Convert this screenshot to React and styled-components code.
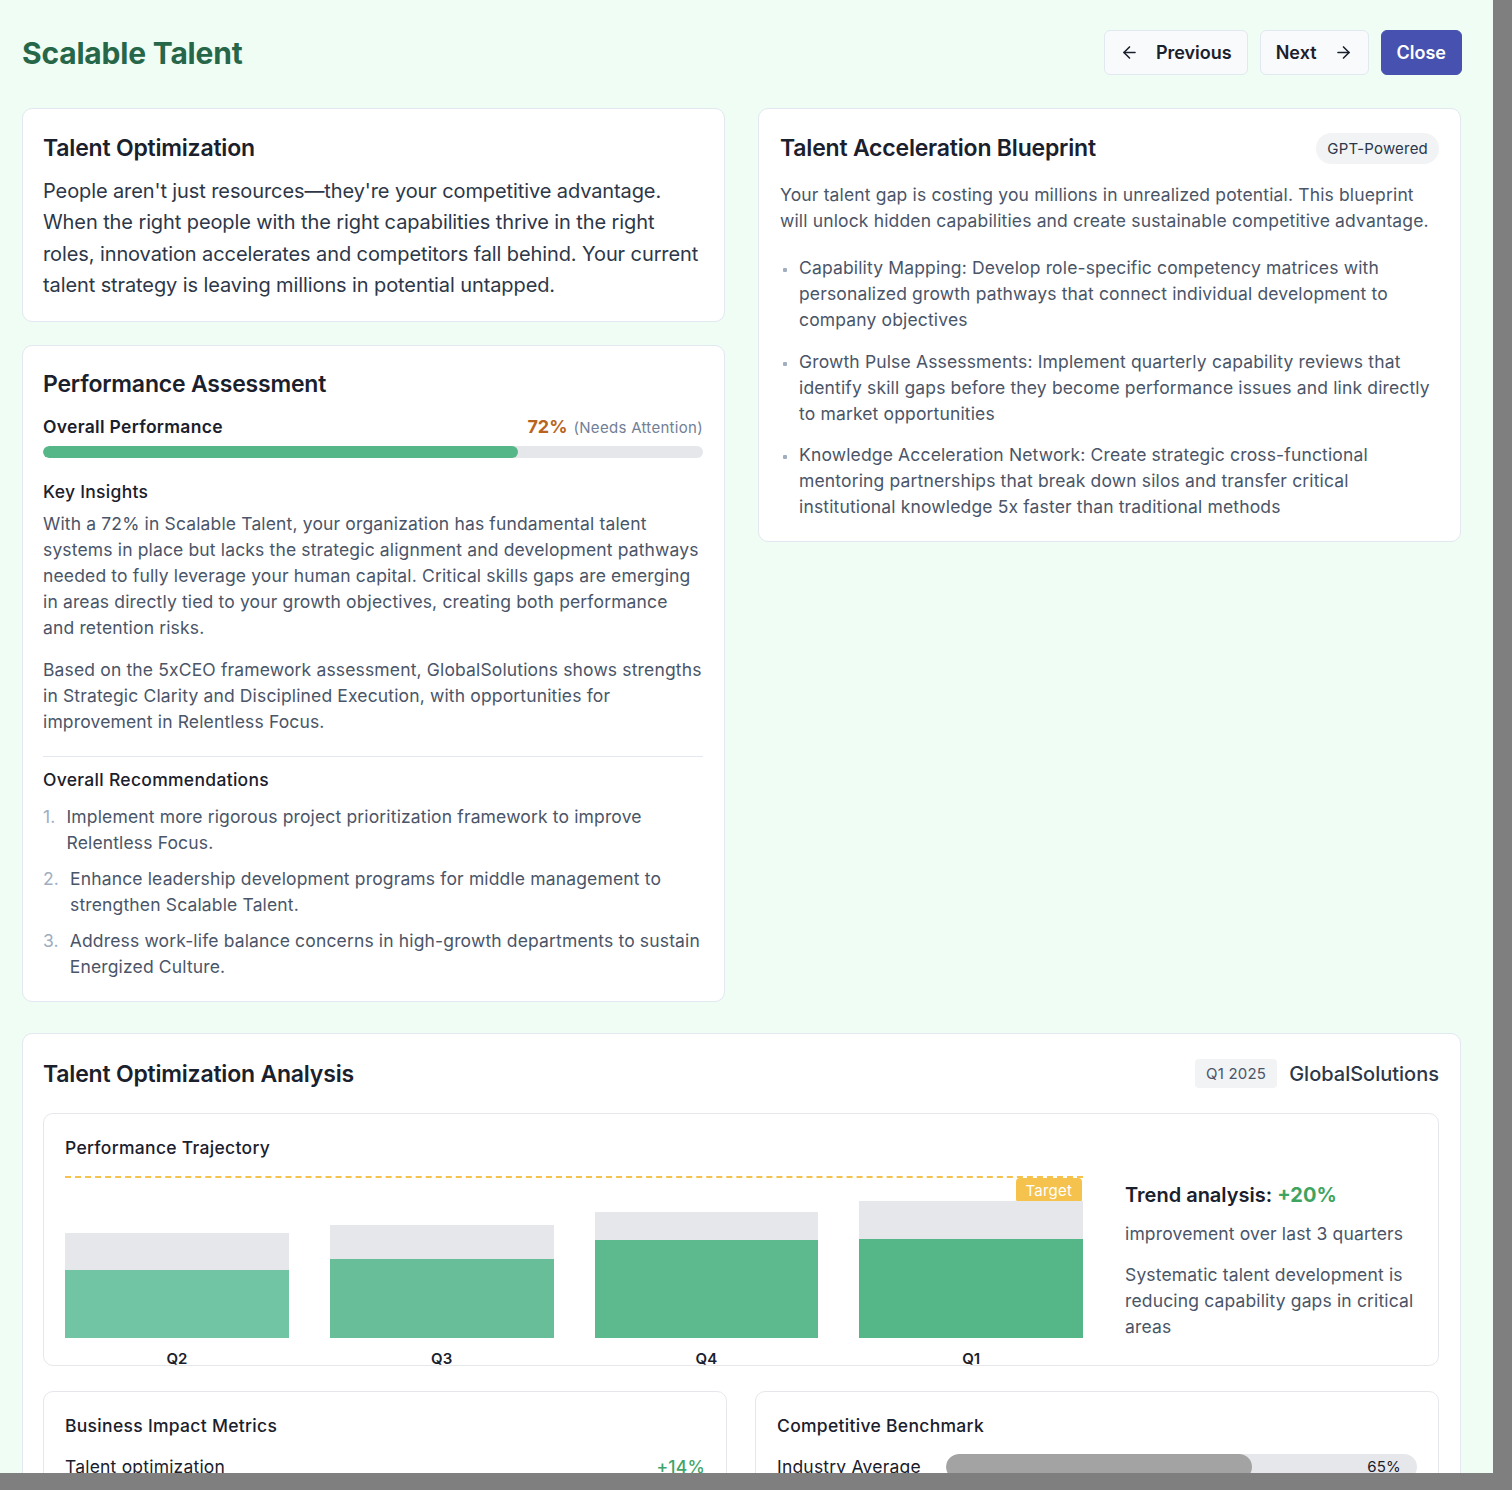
import React from 'react'
import styled, { createGlobalStyle } from 'styled-components'
import { ArrowLeft, ArrowRight } from 'lucide-react'

const GlobalStyle = createGlobalStyle`
  html, body {
    margin: 0;
    padding: 0;
    background: #7f7f7f;
    font-family: Inter, "Noto Sans", "Liberation Sans", sans-serif;
    -webkit-font-smoothing: antialiased;
  }
  * { box-sizing: border-box; }
`

const Modal = styled.div`
  width: 1493px;
  height: 1473px;
  overflow: hidden;
  background: #f0fdf4;
  padding: 30px 31px 0 22px;
`

const Header = styled.header`
  display: flex;
  align-items: center;
  justify-content: space-between;
  height: 45px;
  margin-bottom: 33px;
`

const PageTitle = styled.h1`
  margin: 0;
  font-size: 30px;
  font-weight: 700;
  color: #276749;
  letter-spacing: -0.2px;
`

const Actions = styled.div`
  display: flex;
  gap: 12px;
`

const NavButton = styled.button`
  display: flex;
  align-items: center;
  gap: ${p => (p.$primary ? '0' : '17px')};
  height: 45px;
  padding: 0 15px;
  border-radius: 6px;
  border: 1px solid ${p => (p.$primary ? '#4651b0' : '#e2e8f0')};
  background: ${p => (p.$primary ? '#4651b0' : '#f8fafc')};
  color: ${p => (p.$primary ? '#ffffff' : '#1a202c')};
  font-family: inherit;
  font-size: 18px;
  font-weight: 600;
  cursor: pointer;
`

const Content = styled.main`
  width: 1439px;
`

const TopGrid = styled.div`
  display: grid;
  grid-template-columns: 703px 703px;
  gap: 33px;
  align-items: start;
`

const Column = styled.div`
  display: flex;
  flex-direction: column;
  gap: 23px;
`

const Card = styled.section`
  background: #ffffff;
  border: 1px solid #e2e8f0;
  border-radius: 10px;
  padding: ${p => p.$pad || '23px 21px 19px 20px'};
`

const CardHead = styled.div`
  display: flex;
  align-items: center;
  justify-content: space-between;
`

const CardTitle = styled.h2`
  margin: 0;
  font-size: 23px;
  line-height: 32px;
  font-weight: 600;
  color: #1a202c;
  letter-spacing: -0.2px;
`

const Lead = styled.p`
  margin: 12px 0 0;
  font-size: 20px;
  line-height: 31.4px;
  letter-spacing: -0.1px;
  color: #2d3748;
`

const Body = styled.p`
  margin: ${p => p.$m || '0'};
  font-size: 17.5px;
  line-height: 26px;
  letter-spacing: 0.15px;
  color: #4a5568;
`

const ScoreRow = styled.div`
  display: flex;
  align-items: baseline;
  justify-content: space-between;
  margin-top: 15px;
  line-height: 24px;
`

const ScoreLabel = styled.span`
  font-size: 17.5px;
  font-weight: 600;
  letter-spacing: 0.3px;
  color: #1a202c;
`

const ScoreValue = styled.span`
  font-size: 18px;
  font-weight: 700;
  color: #b7651e;
`

const ScoreNote = styled.span`
  font-size: 15px;
  font-weight: 400;
  letter-spacing: 0.3px;
  color: #718096;
  margin-left: 6px;
`

const Track = styled.div`
  height: 12px;
  background: #e5e7eb;
  border-radius: 999px;
  overflow: hidden;
  margin-top: ${p => p.$mt || 0}px;
`

const Fill = styled.div`
  height: 100%;
  background: #55b788;
  border-radius: 999px;
`

const SubHeading = styled.h3`
  margin: ${p => p.$m || '0'};
  font-size: 17.5px;
  line-height: 24px;
  font-weight: 500;
  letter-spacing: 0.3px;
  color: #1a202c;
`

const Divider = styled.hr`
  border: none;
  border-top: 1px solid #e2e8f0;
  margin: 21px 0 11px;
`

const List = styled.ol`
  list-style: none;
  margin: ${p => p.$m || '12px 0 0'};
  padding: 0;
  display: flex;
  flex-direction: column;
  gap: ${p => p.$gap || 10}px;
`

const Item = styled.li`
  display: flex;
  gap: ${p => p.$gap || 11}px;
  font-size: 17.5px;
  line-height: 26px;
  letter-spacing: 0.15px;
  color: #4a5568;
`

const Num = styled.span`
  color: #a0aec0;
  flex-shrink: 0;
`

const Dot = styled.span`
  flex-shrink: 0;
  width: 4px;
  height: 4px;
  margin: 13px 3px 0 3px;
  background: #a0aec0;
  border-radius: 1px;
`

const Badge = styled.span`
  display: inline-flex;
  align-items: center;
  height: ${p => p.$h || 31}px;
  padding: 0 ${p => p.$px || 11}px;
  border-radius: ${p => p.$r || 16}px;
  background: #f1f3f5;
  font-size: 15px;
  letter-spacing: 0.2px;
  color: ${p => p.$color || '#2d3748'};
`

const Wide = styled.section`
  margin-top: 31px;
  background: #ffffff;
  border: 1px solid #e2e8f0;
  border-radius: 10px;
  padding: 24px 21px 40px 20px;
`

const HeadMeta = styled.div`
  display: flex;
  align-items: center;
  gap: 12px;
`

const Company = styled.span`
  font-size: 20px;
  font-weight: 500;
  color: #2d3748;
`

const Panel = styled.div`
  border: 1px solid #e5e7eb;
  border-radius: 10px;
  background: #ffffff;
  margin-top: ${p => p.$mt || 0}px;
  padding: 22px 21px 25px 21px;
`

const PanelTitle = styled.h4`
  margin: 0;
  font-size: 17.5px;
  line-height: 24px;
  font-weight: 500;
  letter-spacing: 0.3px;
  color: #1a202c;
`

const TrajectoryBody = styled.div`
  display: flex;
  gap: 42px;
  margin-top: 16px;
`

const Chart = styled.div`
  position: relative;
  flex: 1;
  height: 162px;
  display: flex;
  align-items: flex-end;
  gap: 41px;
`

const TargetLine = styled.div`
  position: absolute;
  top: 0;
  left: 0;
  right: 0;
  border-top: 2px dashed #f4c24d;
`

const TargetTag = styled.span`
  position: absolute;
  top: 2px;
  right: 1px;
  height: 25px;
  padding: 0 10px;
  display: flex;
  align-items: center;
  background: #f4c24d;
  color: #ffffff;
  font-size: 15px;
  letter-spacing: 0.2px;
  border-radius: 4px;
`

const BarCol = styled.div`
  position: relative;
  flex: 1;
  background: #e5e7eb;
  display: flex;
  flex-direction: column;
  justify-content: flex-end;
`

const BarFill = styled.div`
  background: ${p => p.$color};
`

const BarLabel = styled.span`
  position: absolute;
  top: calc(100% + 11px);
  left: 0;
  right: 0;
  text-align: center;
  font-size: 15px;
  line-height: 20px;
  font-weight: 600;
  color: #1a202c;
`

const Side = styled.div`
  flex: 0 0 292px;
  padding-top: 6px;
`

const TrendTitle = styled.div`
  font-size: 20px;
  line-height: 26px;
  font-weight: 600;
  color: #1a202c;
`

const Up = styled.span`
  color: #3fa45f;
  font-weight: 700;
`

const LowerGrid = styled.div`
  display: grid;
  grid-template-columns: 1fr 1fr;
  gap: 28px;
  margin-top: 25px;
`

const MetricRow = styled.div`
  display: flex;
  align-items: center;
  justify-content: space-between;
  margin-top: 17px;
  font-size: 17.5px;
  line-height: 24px;
  letter-spacing: 0.2px;
  color: #1a202c;
`

const MetricValue = styled.span`
  color: #3fa46a;
  font-weight: 500;
`

const BenchRow = styled.div`
  display: flex;
  align-items: center;
  gap: 25px;
  margin-top: 16px;
  font-size: 17.5px;
  line-height: 26px;
  letter-spacing: 0.2px;
  color: #1a202c;
`

const BenchTrack = styled.div`
  position: relative;
  flex: 1;
  height: 26px;
  background: #e5e7eb;
  border-radius: 999px;
  overflow: hidden;
`

const BenchFill = styled.div`
  height: 100%;
  background: #a3a3a3;
  border-radius: 999px;
`

const BenchValue = styled.span`
  position: absolute;
  right: 16px;
  top: 0;
  font-size: 15px;
  line-height: 26px;
  color: #1a202c;
`

const insights = [
  'With a 72% in Scalable Talent, your organization has fundamental talent systems in place but lacks the strategic alignment and development pathways needed to fully leverage your human capital. Critical skills gaps are emerging in areas directly tied to your growth objectives, creating both performance and retention risks.',
  'Based on the 5xCEO framework assessment, GlobalSolutions shows strengths in Strategic Clarity and Disciplined Execution, with opportunities for improvement in Relentless Focus.'
]

const recommendations = [
  'Implement more rigorous project prioritization framework to improve Relentless Focus.',
  'Enhance leadership development programs for middle management to strengthen Scalable Talent.',
  'Address work-life balance concerns in high-growth departments to sustain Energized Culture.'
]

const blueprint = [
  'Capability Mapping: Develop role-specific competency matrices with personalized growth pathways that connect individual development to company objectives',
  'Growth Pulse Assessments: Implement quarterly capability reviews that identify skill gaps before they become performance issues and link directly to market opportunities',
  'Knowledge Acceleration Network: Create strategic cross-functional mentoring partnerships that break down silos and transfer critical institutional knowledge 5x faster than traditional methods'
]

const quarters = [
  { label: 'Q2', total: 105, fill: 68, color: '#71c5a5' },
  { label: 'Q3', total: 113, fill: 79, color: '#67be99' },
  { label: 'Q4', total: 126, fill: 98, color: '#5cba8e' },
  { label: 'Q1', total: 137, fill: 99, color: '#55b687' }
]

export default function App() {
  return (
    <>
      <GlobalStyle />
      <Modal>
        <Header>
          <PageTitle>Scalable Talent</PageTitle>
          <Actions>
            <NavButton>
              <ArrowLeft size={19} strokeWidth={2} />
              Previous
            </NavButton>
            <NavButton>
              Next
              <ArrowRight size={19} strokeWidth={2} />
            </NavButton>
            <NavButton $primary>Close</NavButton>
          </Actions>
        </Header>

        <Content>
          <TopGrid>
            <Column>
              <Card>
                <CardTitle>Talent Optimization</CardTitle>
                <Lead>
                  People aren't just resources—they're your competitive advantage. When the right
                  people with the right capabilities thrive in the right roles, innovation
                  accelerates and competitors fall behind. Your current talent strategy is leaving
                  millions in potential untapped.
                </Lead>
              </Card>

              <Card $pad="22px 21px 21px 20px">
                <CardTitle>Performance Assessment</CardTitle>
                <ScoreRow>
                  <ScoreLabel>Overall Performance</ScoreLabel>
                  <span>
                    <ScoreValue>72%</ScoreValue>
                    <ScoreNote>(Needs Attention)</ScoreNote>
                  </span>
                </ScoreRow>
                <Track $mt={6}>
                  <Fill style={{ width: '72%' }} />
                </Track>

                <SubHeading $m="22px 0 0">Key Insights</SubHeading>
                <Body $m="7px 0 0">{insights[0]}</Body>
                <Body $m="16px 0 0">{insights[1]}</Body>

                <Divider />
                <SubHeading>Overall Recommendations</SubHeading>
                <List>
                  {recommendations.map((r, i) => (
                    <Item key={i}>
                      <Num>{i + 1}.</Num>
                      <span>{r}</span>
                    </Item>
                  ))}
                </List>
              </Card>
            </Column>

            <Card $pad="23px 21px 21px 21px">
              <CardHead>
                <CardTitle>Talent Acceleration Blueprint</CardTitle>
                <Badge>GPT-Powered</Badge>
              </CardHead>
              <Body $m="18px 0 0">
                Your talent gap is costing you millions in unrealized potential. This blueprint will
                unlock hidden capabilities and create sustainable competitive advantage.
              </Body>
              <List as="ul" $m="21px 0 0" $gap={15.5}>
                {blueprint.map((b, i) => (
                  <Item key={i} $gap={9}>
                    <Dot />
                    <span>{b}</span>
                  </Item>
                ))}
              </List>
            </Card>
          </TopGrid>

          <Wide>
            <CardHead>
              <CardTitle>Talent Optimization Analysis</CardTitle>
              <HeadMeta>
                <Badge $h={29} $px={11} $r={4} $color="#4a5568">Q1 2025</Badge>
                <Company>GlobalSolutions</Company>
              </HeadMeta>
            </CardHead>

            <Panel $mt={23}>
              <PanelTitle>Performance Trajectory</PanelTitle>
              <TrajectoryBody>
                <Chart>
                  <TargetLine />
                  <TargetTag>Target</TargetTag>
                  {quarters.map(q => (
                    <BarCol key={q.label} style={{ height: q.total }}>
                      <BarFill $color={q.color} style={{ height: q.fill }} />
                      <BarLabel>{q.label}</BarLabel>
                    </BarCol>
                  ))}
                </Chart>
                <Side>
                  <TrendTitle>
                    Trend analysis: <Up>+20%</Up>
                  </TrendTitle>
                  <Body $m="13px 0 0">improvement over last 3 quarters</Body>
                  <Body $m="15px 0 0">
                    Systematic talent development is reducing capability gaps in critical areas
                  </Body>
                </Side>
              </TrajectoryBody>
            </Panel>

            <LowerGrid>
              <Panel>
                <PanelTitle>Business Impact Metrics</PanelTitle>
                <MetricRow>
                  <span>Talent optimization</span>
                  <MetricValue>+14%</MetricValue>
                </MetricRow>
                <MetricRow>
                  <span>Retention improvement</span>
                  <MetricValue>+9%</MetricValue>
                </MetricRow>
              </Panel>
              <Panel>
                <PanelTitle>Competitive Benchmark</PanelTitle>
                <BenchRow>
                  <span>Industry Average</span>
                  <BenchTrack>
                    <BenchFill style={{ width: '65%' }} />
                    <BenchValue>65%</BenchValue>
                  </BenchTrack>
                </BenchRow>
              </Panel>
            </LowerGrid>
          </Wide>
        </Content>
      </Modal>
    </>
  )
}
